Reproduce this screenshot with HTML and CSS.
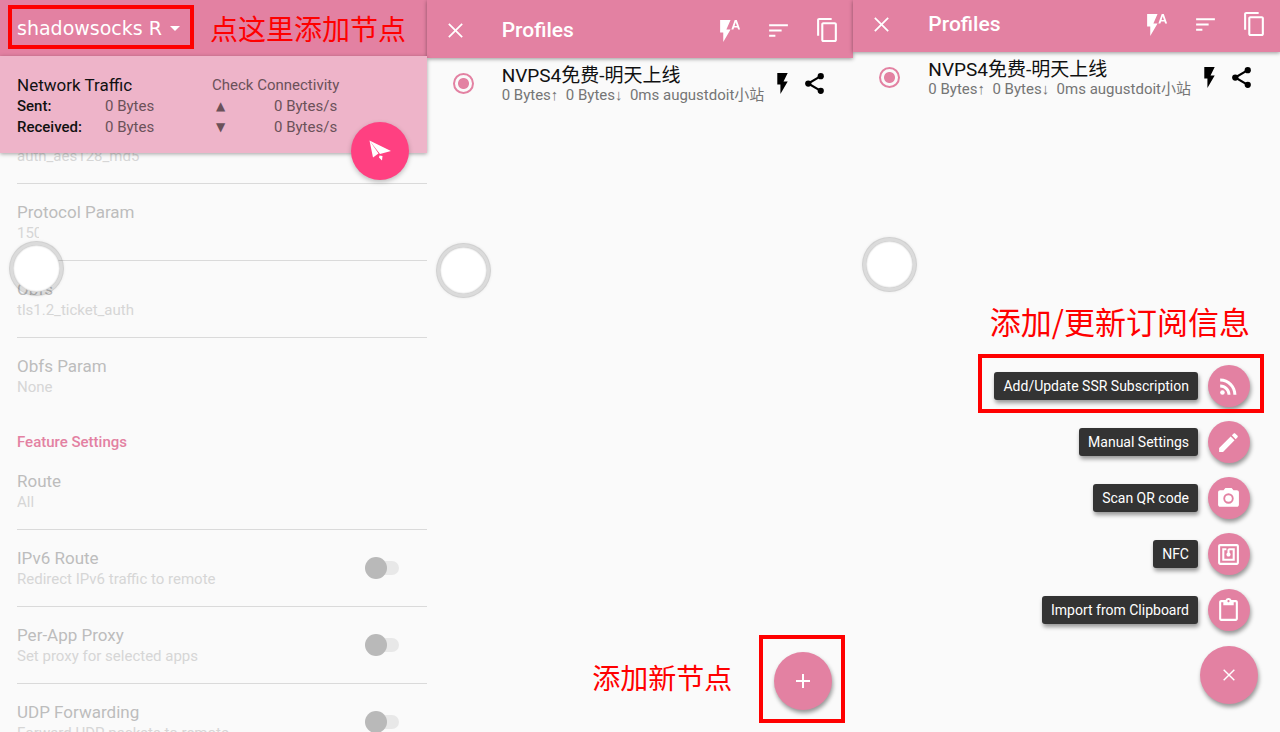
FILE: index.html
```
<!DOCTYPE html>
<html lang="zh-CN">
<head>
  <meta charset="UTF-8" />
  <meta name="viewport" content="width=device-width, initial-scale=1.0" />
  <title>Shadowsocks R - 添加节点</title>
  <link rel="stylesheet" href="styles.css">
</head>
<body>
  <!-- shared icons -->
  <svg class="sprite" aria-hidden="true">
    <symbol id="close" viewBox="0 0 24 24"><path d="M19 6.2L17.8 5 12 10.8 6.2 5 5 6.2 10.8 12 5 17.8 6.2 19 12 13.2 17.8 19 19 17.8 13.2 12z"/></symbol>
    <symbol id="flash-auto" viewBox="0 0 24 24"><path d="M3 2v12h3v9l7-12H9l4-9zm16 0h-2l-3.200 9h1.900l.7-2h3.200l.7 2h1.900zm-2.150 5.650L18 4l1.150 3.650z"/></symbol>
    <symbol id="sort" viewBox="0 0 24 24"><path d="M3 18h6v-2H3zM3 6v2h18V6zm0 7h12v-2H3z"/></symbol>
    <symbol id="copy" viewBox="0 0 24 24"><path d="M16 0H4c-1.100 0-2 .9-2 2v15h2V2h12zm3 4H8c-1.100 0-2 .9-2 2v15c0 1.100.9 2 2 2h11c1.100 0 2-.9 2-2V6c0-1.100-.9-2-2-2zm0 17H8V6h11z"/></symbol>
    <symbol id="flash" viewBox="0 0 24 24"><path d="M7 2v11h3v9l7-12h-4l4-8z"/></symbol>
    <symbol id="share" viewBox="0 0 24 24"><path d="M6 12L18 5M6 12l12 7" fill="none" stroke="currentColor" stroke-width="2"/><circle cx="18" cy="5" r="3"/><circle cx="6" cy="12" r="3"/><circle cx="18" cy="19" r="3"/></symbol>
  </svg>

  <main class="screens">
    <section class="screen">
      <header class="bar bar-main">
        <button class="app-title marked" type="button" aria-haspopup="true">shadowsocks R <span class="caret"></span></button>
        <span class="note">点这里添加节点</span>
      </header>
      <div class="traffic">
        <div class="traffic-grid">
          <strong class="traffic-title">Network Traffic</strong>
          <span class="check">Check Connectivity</span>
          <b>Sent:</b><span>0 Bytes</span><span class="arrow">▲</span><span class="rate">0 Bytes/s</span>
          <b>Received:</b><span>0 Bytes</span><span class="arrow">▼</span><span class="rate">0 Bytes/s</span>
        </div>
        <button class="fab fab-connect" type="button" aria-label="Connect">
          <svg viewBox="0 0 24 24"><path d="M1.500 1.500L5 18.500l5.500-4zM1.500 1.500l10.500 13.500 11-3zM11.500 16.500l3 .5-.5 4.500-3-3z"/></svg>
        </button>
      </div>
      <div class="settings">
        <div class="item item-cut"><p class="summary">auth_aes128_md5</p></div>
        <div class="item">
          <p class="name">Protocol Param</p>
          <p class="summary summary-cut">150</p>
        </div>
        <div class="item">
          <p class="name">Obfs</p>
          <p class="summary">tls1.2_ticket_auth</p>
        </div>
        <div class="item item-last">
          <p class="name">Obfs Param</p>
          <p class="summary">None</p>
        </div>
        <h2 class="group">Feature Settings</h2>
        <div class="item">
          <p class="name">Route</p>
          <p class="summary">All</p>
        </div>
        <label class="item item-switch">
          <span><span class="name">IPv6 Route</span><span class="summary">Redirect IPv6 traffic to remote</span></span>
          <input class="switch" type="checkbox">
        </label>
        <label class="item item-switch">
          <span><span class="name">Per-App Proxy</span><span class="summary">Set proxy for selected apps</span></span>
          <input class="switch" type="checkbox">
        </label>
        <label class="item item-switch">
          <span><span class="name">UDP Forwarding</span><span class="summary">Forward UDP packets to remote</span></span>
          <input class="switch" type="checkbox">
        </label>
      </div>
      <div class="ball ball-first"></div>
    </section>

    <section class="screen">
      <header class="bar">
        <button class="icon-btn" type="button" aria-label="Close"><svg><use href="#close"/></svg></button>
        <h1>Profiles</h1>
        <button class="icon-btn" type="button" aria-label="Test all"><svg><use href="#flash-auto"/></svg></button>
        <button class="icon-btn" type="button" aria-label="Sort"><svg><use href="#sort"/></svg></button>
        <button class="icon-btn" type="button" aria-label="Copy"><svg><use href="#copy"/></svg></button>
      </header>
      <div class="profile">
        <input class="radio" type="radio" name="profile-a" id="profile-a" checked>
        <label for="profile-a">
          <span class="profile-name">NVPS4免费-明天上线</span>
          <span class="profile-info">0 Bytes↑&nbsp; 0 Bytes↓&nbsp; 0ms augustdoit小站</span>
        </label>
        <button class="icon-btn" type="button" aria-label="Test"><svg><use href="#flash"/></svg></button>
        <button class="icon-btn" type="button" aria-label="Share"><svg><use href="#share"/></svg></button>
      </div>
      <div class="add-area">
        <span class="note">添加新节点</span>
        <span class="marked">
          <button class="fab" type="button" aria-label="Add"><svg viewBox="0 0 24 24"><path d="M19 13h-6v6h-2v-6H5v-2h6V5h2v6h6z"/></svg></button>
        </span>
      </div>
      <div class="ball"></div>
    </section>

    <section class="screen screen-menu">
      <header class="bar">
        <button class="icon-btn" type="button" aria-label="Close"><svg><use href="#close"/></svg></button>
        <h1>Profiles</h1>
        <button class="icon-btn" type="button" aria-label="Test all"><svg><use href="#flash-auto"/></svg></button>
        <button class="icon-btn" type="button" aria-label="Sort"><svg><use href="#sort"/></svg></button>
        <button class="icon-btn" type="button" aria-label="Copy"><svg><use href="#copy"/></svg></button>
      </header>
      <div class="profile">
        <input class="radio" type="radio" name="profile-b" id="profile-b" checked>
        <label for="profile-b">
          <span class="profile-name">NVPS4免费-明天上线</span>
          <span class="profile-info">0 Bytes↑&nbsp; 0 Bytes↓&nbsp; 0ms augustdoit小站</span>
        </label>
        <button class="icon-btn" type="button" aria-label="Test"><svg><use href="#flash"/></svg></button>
        <button class="icon-btn" type="button" aria-label="Share"><svg><use href="#share"/></svg></button>
      </div>
      <div class="menu">
        <span class="note note-big">添加/更新订阅信息</span>
        <button class="menu-item marked" type="button">
          <span class="tip">Add/Update SSR Subscription</span>
          <span class="mini"><svg viewBox="0 0 24 24"><circle cx="6.200" cy="17.800" r="2.200"/><path d="M4 4.400v2.900c7 0 12.700 5.700 12.700 12.700h2.900C19.600 11.400 12.600 4.400 4 4.400zm0 5.700v2.800c3.900 0 7.100 3.200 7.100 7.100h2.800c0-5.500-4.400-9.900-9.900-9.900z"/></svg></span>
        </button>
        <button class="menu-item" type="button">
          <span class="tip">Manual Settings</span>
          <span class="mini"><svg viewBox="0 0 24 24"><path d="M3 17.250V21h3.750L17.800 9.900l-3.700-3.700zM20.700 7c.4-.4.4-1 0-1.400l-2.300-2.300c-.4-.4-1-.4-1.400 0l-1.800 1.800 3.700 3.700z"/></svg></span>
        </button>
        <button class="menu-item" type="button">
          <span class="tip">Scan QR code</span>
          <span class="mini"><svg viewBox="0 0 24 24"><circle cx="12" cy="12" r="3.200"/><path fill-rule="evenodd" d="M9 2L7.200 4H4c-1.100 0-2 .9-2 2v12c0 1.100.9 2 2 2h16c1.100 0 2-.9 2-2V6c0-1.100-.9-2-2-2h-3.200L15 2zm3 15a5 5 0 1 1 0-10 5 5 0 0 1 0 10z"/></svg></span>
        </button>
        <button class="menu-item" type="button">
          <span class="tip">NFC</span>
          <span class="mini"><svg viewBox="0 0 24 24"><path d="M20 2H4c-1.100 0-2 .9-2 2v16c0 1.100.9 2 2 2h16c1.100 0 2-.9 2-2V4c0-1.100-.9-2-2-2zm0 18H4V4h16zM18 6h-5c-1.100 0-2 .9-2 2v2.300c-.6.3-1 1-1 1.700 0 1.100.9 2 2 2s2-.9 2-2c0-.7-.4-1.400-1-1.700V8h3v8H8V8h2V6H6v12h12z"/></svg></span>
        </button>
        <button class="menu-item" type="button">
          <span class="tip">Import from Clipboard</span>
          <span class="mini"><svg viewBox="0 0 24 24"><path d="M19 2h-4.200C14.400.8 13.300 0 12 0S9.600.8 9.200 2H5c-1.100 0-2 .9-2 2v16c0 1.100.9 2 2 2h14c1.100 0 2-.9 2-2V4c0-1.100-.9-2-2-2zm-7 0c.6 0 1 .4 1 1s-.4 1-1 1-1-.4-1-1 .4-1 1-1zm7 18H5V4h2v3h10V4h2z"/></svg></span>
        </button>
        <button class="fab fab-close" type="button" aria-label="Close menu"><svg><use href="#close"/></svg></button>
      </div>
      <div class="ball"></div>
    </section>
  </main>
</body>
</html>
```
FILE: styles.css
```
* {
  box-sizing: border-box;
}
body {
  margin: 0;
  background: #fafafa;
  font-family: Roboto, "Liberation Sans", "Noto Sans CJK SC", sans-serif;
  font-size: 15px;
  color: #111;
}
p, h1, h2 {
  margin: 0;
}
button {
  padding: 0;
  border: none;
  background: none;
  color: inherit;
  font-family: inherit;
  font-size: inherit;
}
svg {
  display: block;
  fill: currentColor;
}
.sprite {
  position: absolute;
  width: 0;
  height: 0;
}
.screens {
  display: grid;
  grid-template-columns: repeat(3, minmax(0, 1fr));
  height: 100vh;
  overflow: hidden;
}
.screen {
  position: relative;
  display: flex;
  flex-direction: column;
  min-height: 0;
}

/* toolbar */
.bar {
  display: flex;
  align-items: flex-end;
  flex-shrink: 0;
  gap: 24px;
  height: 58px;
  padding: 0 13px 0 16px;
  background: #e381a2;
  color: #fff;
  box-shadow: 0 1px 4px rgba(0,0,0,0.4);
}
.screen-menu .bar {
  height: 52px;
}
.bar h1 {
  flex: 1;
  padding-left: 10px;
  font-size: 21px;
  font-weight: 500;
  line-height: 56px;
}
.icon-btn svg {
  width: 25px;
  height: 25px;
}
.bar .icon-btn {
  display: flex;
  align-items: center;
  height: 56px;
}
.bar-main {
  align-items: center;
  gap: 30px;
  height: 56px;
  padding: 0 17px;
  box-shadow: none;
}
.app-title {
  display: flex;
  align-items: center;
  gap: 8px;
  font-family: "DejaVu Sans", sans-serif;
  font-size: 19px;
}
.caret {
  border: 5px solid transparent;
  border-top-color: #fff;
  border-bottom: none;
}

/* red hints */
.note {
  color: #f00;
  font-family: "Noto Sans CJK SC", sans-serif;
  font-size: 28px;
  line-height: 32px;
  white-space: nowrap;
}
.note-big {
  margin-bottom: 14px;
  padding-right: 8px;
  font-size: 31px;
}
.marked {
  position: relative;
}
.marked::after {
  content: "";
  position: absolute;
  inset: -11px -14px -6px -16px;
  border: 4px solid #f00;
}
.app-title.marked::after {
  inset: -12px -14px -10px -9px;
}
.add-area .marked::after {
  inset: -17px -13px -13px -15px;
}

/* traffic panel */
.traffic {
  position: relative;
  z-index: 1;
  padding: 19px 17px 15px;
  background: #eeb4c9;
  box-shadow: 0 1px 4px rgba(0,0,0,0.35);
}
.traffic-grid {
  display: grid;
  grid-template-columns: 88px 107px 62px 62px;
  line-height: 21px;
  color: #6b5159;
  white-space: nowrap;
}
.traffic-title, .check {
  grid-column: span 2;
}
.traffic-title {
  font-size: 17px;
  font-weight: 400;
  color: #111;
}
.traffic b {
  font-weight: 500;
  color: #111;
}
.arrow {
  padding-left: 4px;
  font-family: "DejaVu Sans", sans-serif;
  font-size: 12px;
}
.rate {
  text-align: right;
}
.fab {
  display: flex;
  align-items: center;
  justify-content: center;
  width: 58px;
  height: 58px;
  border-radius: 50%;
  background: #e381a2;
  color: #fff;
  box-shadow: 1px 3px 4px rgba(0,0,0,0.4);
}
.fab svg {
  width: 24px;
  height: 24px;
}
.fab-connect {
  position: absolute;
  right: 18px;
  bottom: -27px;
  background: #ff4081;
  box-shadow: 0 2px 5px rgba(0,0,0,0.25);
}

/* settings list */
.settings {
  flex: 1;
  min-height: 0;
  padding-left: 17px;
  overflow: hidden;
}
.item {
  display: block;
  padding: 17px 0;
  border-bottom: 1px solid #dadada;
}
.item-cut {
  display: flex;
  flex-direction: column;
  justify-content: flex-end;
  height: 31px;
  padding-top: 0;
  overflow: hidden;
}
.item-last {
  border-bottom: none;
}
.item-switch {
  display: flex;
  align-items: center;
  justify-content: space-between;
  padding-right: 28px;
}
.name {
  display: block;
  font-size: 17px;
  line-height: 22px;
  color: #bdbdbd;
}
.summary {
  display: block;
  line-height: 20px;
  color: #d6d6d6;
}
.summary-cut {
  width: 22px;
  overflow: hidden;
}
.group {
  padding: 18px 0 1px;
  font-size: 15px;
  font-weight: 500;
  line-height: 20px;
  color: #e381a2;
}
.switch {
  position: relative;
  appearance: none;
  width: 34px;
  height: 22px;
  margin: 0;
}
.switch::before {
  content: "";
  position: absolute;
  inset: 4px 0 4px 8px;
  border-radius: 7px;
  background: #e8e8e8;
}
.switch::after {
  content: "";
  position: absolute;
  inset: 0 12px 0 0;
  border-radius: 50%;
  background: #b9b9b9;
}

/* profile row */
.profile {
  display: flex;
  align-items: center;
  gap: 7px;
  padding: 6px 26px;
}
.profile label {
  flex: 1;
  min-width: 0;
  padding-left: 21px;
  white-space: nowrap;
}
.profile-name {
  display: block;
  font-size: 19px;
  line-height: 23px;
}
.profile-info {
  display: block;
  line-height: 16px;
  color: #757575;
}
.profile .icon-btn {
  color: #000;
}
.radio {
  flex-shrink: 0;
  appearance: none;
  width: 21px;
  height: 21px;
  margin: 0;
  border: 2px solid #e381a2;
  border-radius: 50%;
  background: radial-gradient(circle, #e381a2 5px, transparent 6px);
}

/* floating buttons */
.add-area {
  display: flex;
  align-items: center;
  justify-content: flex-end;
  gap: 42px;
  margin-top: auto;
  padding: 0 21px 22px;
}
.add-area .note {
  padding-bottom: 8px;
}
.menu {
  display: flex;
  flex-direction: column;
  align-items: flex-end;
  gap: 14px;
  margin-top: auto;
  padding: 0 22px 28px;
}
.menu-item {
  display: flex;
  align-items: center;
  gap: 10px;
  margin-right: 8px;
}
.tip {
  padding: 0 9px;
  border-radius: 3px;
  background: #333;
  color: #fff;
  font-size: 14px;
  line-height: 28px;
  box-shadow: 1px 3px 4px rgba(0,0,0,0.4);
}
.mini {
  display: flex;
  align-items: center;
  justify-content: center;
  width: 42px;
  height: 42px;
  border-radius: 50%;
  background: #e381a2;
  color: #fff;
  box-shadow: 1px 3px 4px rgba(0,0,0,0.4);
}
.mini svg {
  width: 25px;
  height: 25px;
}
.fab-close {
  margin-top: 1px;
}
.fab-close svg {
  width: 20px;
  height: 20px;
}

/* assistive touch ball */
.ball {
  position: absolute;
  top: 243px;
  left: 9px;
  width: 55px;
  height: 55px;
  border: 4px solid rgba(0,0,0,0.12);
  border-radius: 50%;
  background: #fff;
  background-clip: padding-box;
  box-shadow: 0 0 3px rgba(0,0,0,0.08), inset 0 0 2px rgba(0,0,0,0.4);
}
.ball-first {
  top: 241px;
}
.screen-menu .ball {
  top: 237px;
}
```
